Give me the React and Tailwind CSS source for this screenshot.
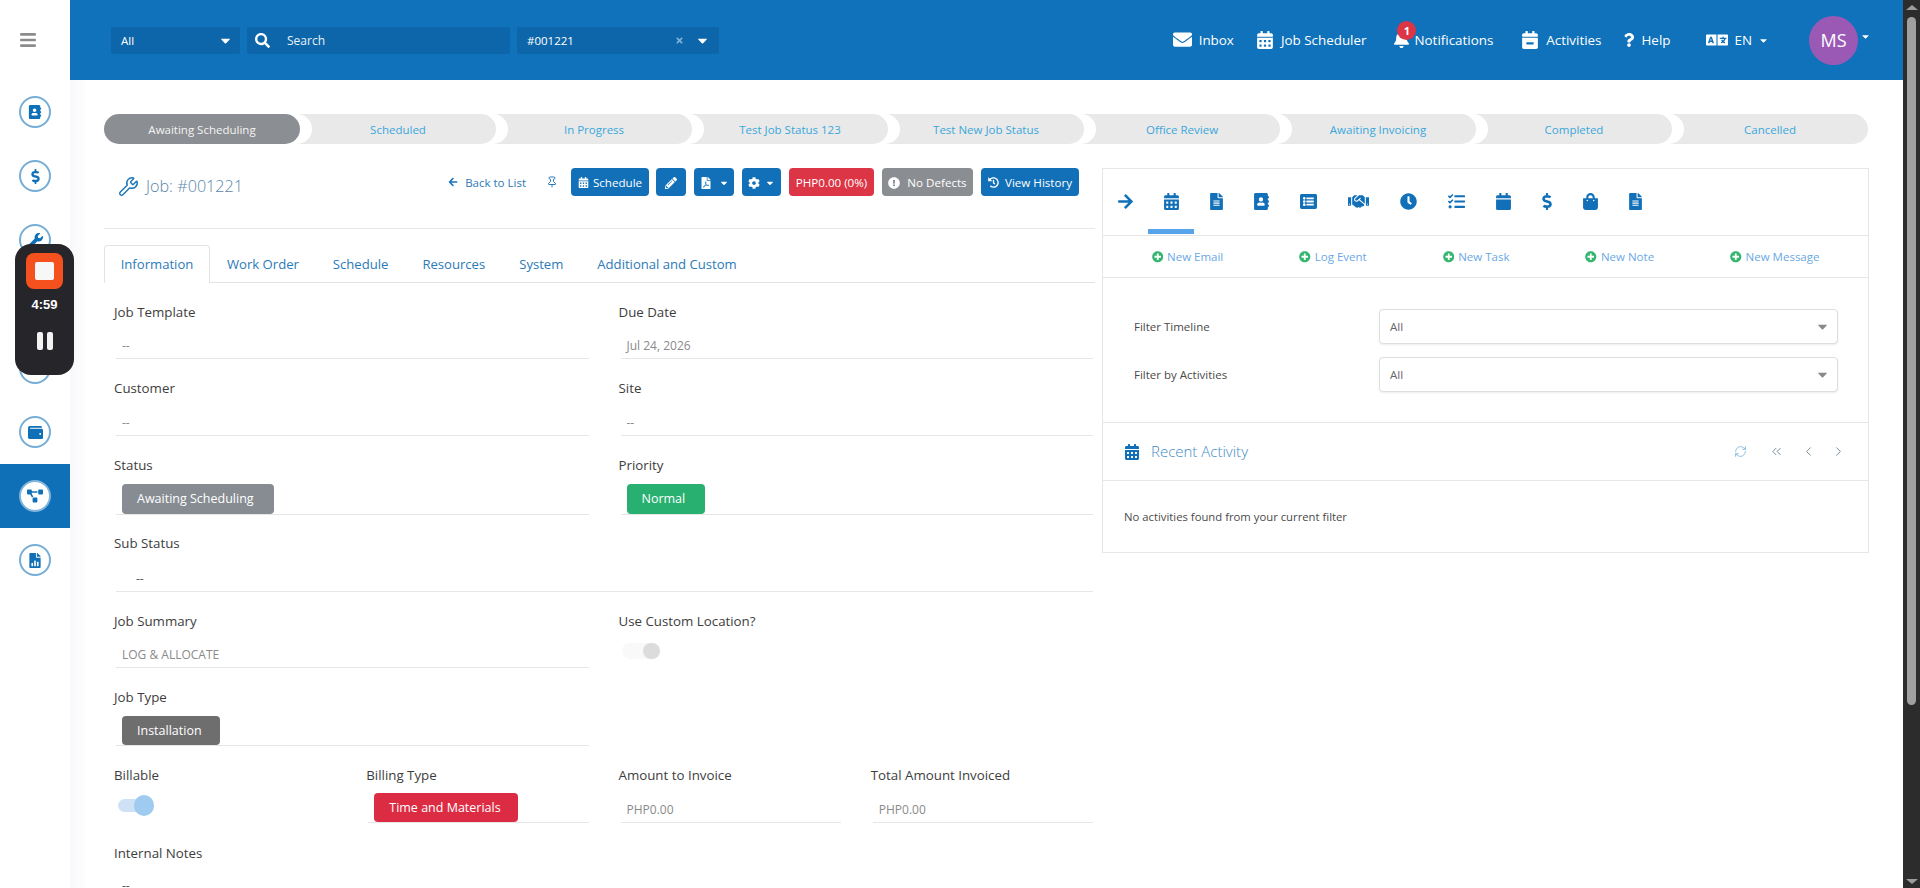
import React from "react";
import {
  FaBars, FaSearch, FaTimes, FaCaretDown, FaEnvelope, FaCalendarAlt, FaBell, FaCalendarMinus, FaQuestion, FaLanguage,
  FaAddressBook, FaDollarSign, FaWrench, FaWallet, FaProjectDiagram, FaArrowLeft, FaArrowRight, FaPencilAlt, FaFilePdf,
  FaCog, FaExclamationCircle, FaHistory, FaFileAlt, FaListAlt, FaHandshake, FaClock, FaTasks, FaCalendar, FaShoppingBag,
  FaPlusCircle, FaUsers, FaBoxes,
} from "react-icons/fa";
import { Pin, RefreshCw, ChevronsLeft, ChevronLeft, ChevronRight, Wrench } from "lucide-react";

const FileChart = ({ className }) => (
  <svg viewBox="0 0 384 512" className={className} fill="currentColor">
    <path d="M224 0H24C11 0 0 11 0 24v464c0 13 11 24 24 24h336c13 0 24-11 24-24V160H248c-13 0-24-11-24-24V0zm160 122v6H256V0h6c6 0 12 3 17 7l98 98c4 5 7 11 7 17z" />
    <rect x="70" y="340" width="56" height="110" fill="#fff" />
    <rect x="164" y="260" width="56" height="190" fill="#fff" />
    <rect x="258" y="300" width="56" height="150" fill="#fff" />
  </svg>
);

const sideItems = [
  { Icon: FaAddressBook, size: "text-[14px]" },
  { Icon: FaDollarSign, size: "text-[15px]" },
  { Icon: FaWrench, size: "text-[15px]" },
  { Icon: FaUsers, size: "text-[14px]" },
  { Icon: FaBoxes, size: "text-[14px]" },
  { Icon: FaWallet, size: "text-[15px]" },
  { Icon: FaProjectDiagram, size: "text-[16px]", active: true },
  { Icon: FileChart, size: "w-[12px] h-[15px]" },
];

const steps = [
  ["Awaiting Scheduling", "w-[196px] z-[9] bg-[#8b8e92] text-[#f4f4f4]"],
  ["Scheduled", "w-[216px] -ml-[20px] pl-[20px] z-[8] bg-[#e9e9e9] text-[#3aa7dc]"],
  ["In Progress", "w-[216px] -ml-[20px] pl-[20px] z-[7] bg-[#e9e9e9] text-[#3aa7dc]"],
  ["Test Job Status 123", "w-[216px] -ml-[20px] pl-[20px] z-[6] bg-[#e9e9e9] text-[#3aa7dc]"],
  ["Test New Job Status", "w-[216px] -ml-[20px] pl-[20px] z-[5] bg-[#e9e9e9] text-[#3aa7dc]"],
  ["Office Review", "w-[216px] -ml-[20px] pl-[20px] z-[4] bg-[#e9e9e9] text-[#3aa7dc]"],
  ["Awaiting Invoicing", "w-[216px] -ml-[20px] pl-[20px] z-[3] bg-[#e9e9e9] text-[#3aa7dc]"],
  ["Completed", "w-[216px] -ml-[20px] pl-[20px] z-[2] bg-[#e9e9e9] text-[#3aa7dc]"],
  ["Cancelled", "w-[216px] -ml-[20px] pl-[20px] z-[1] bg-[#e9e9e9] text-[#3aa7dc]"],
];

const Btn = ({ className = "", children }) => (
  <div className={`h-[28px] rounded-[4px] flex items-center justify-center text-white text-[11.6px] pt-[1px] ${className}`}>{children}</div>
);

const NavItem = ({ icon, children, className = "" }) => (
  <div className={`flex items-center text-white text-[13.4px] ${className}`}>
    {icon}
    <span className="pt-[1px]">{children}</span>
  </div>
);

const Label = ({ children }) => (
  <div className="h-[20px] pt-[2px] flex items-center text-[13.3px] text-[#3d3d3d] leading-none">{children}</div>
);

const Field = ({ label, row, box, className = "", children }) => (
  <div className={`${row} ${className}`}>
    <Label>{label}</Label>
    <div className={`${box} border-b border-[#e6e6e6] ml-[2px] relative flex items-end`}>{children}</div>
  </div>
);

const Val = ({ className = "text-[#8a8a8a] pl-[6px]", children }) => (
  <div className={`text-[12px] leading-none pb-[6px] ${className}`}>{children}</div>
);

const Chip = ({ className = "", children }) => (
  <div className={`rounded-[4px] text-white text-[12.5px] flex items-center pl-[15px] pt-[1px] leading-none ${className}`}>{children}</div>
);

const tabs = ["Work Order", "Schedule", "Resources", "System", "Additional and Custom"];

const panelIcons = [
  [FaCalendarAlt, "w-[15px] h-[17px]"],
  [FaFileAlt, "w-[13px] h-[17px]"],
  [FaAddressBook, "w-[15px] h-[17px]"],
  [FaListAlt, "w-[17px] h-[17px]"],
  [FaHandshake, "w-[21px] h-[17px]"],
  [FaClock, "w-[17px] h-[17px]"],
  [FaTasks, "w-[17px] h-[17px]"],
  [FaCalendar, "w-[15px] h-[17px]"],
  [FaDollarSign, "w-[10px] h-[17px]"],
  [FaShoppingBag, "w-[15px] h-[17px]"],
  [FaFileAlt, "w-[13px] h-[17px]"],
];

const actions = ["New Email", "Log Event", "New Task", "New Note", "New Message"];

const Filter = ({ label }) => (
  <div className="flex items-center h-[35px]">
    <div className="w-[247px] pl-[2px] text-[11.5px] text-[#4a4a4a]">{label}</div>
    <div className="w-[459px] h-[35px] rounded-[4px] border border-[#dedede] shadow-[0_1px_2px_rgba(0,0,0,0.08)] bg-white flex items-center justify-between pl-[10px] pr-[7px]">
      <span className="text-[11.5px] text-[#666]">All</span>
      <FaCaretDown className="text-[15px] text-[#8a8a8a]" />
    </div>
  </div>
);

export default function App() {
  return (
    <div className="relative flex h-screen overflow-hidden bg-white font-['Open_Sans',sans-serif]">
      {/* Sidebar */}
      <aside className="w-[70px] shrink-0 bg-white flex flex-col">
        <div className="h-[80px] flex items-center justify-center">
          <FaBars className="text-[#8b8b8b] text-[18px] mr-[14px]" />
        </div>
        {sideItems.map(({ Icon, size, active }, i) => (
          <div key={i} className={`h-[64px] flex items-center justify-center ${active ? "bg-[#0f70b7]" : ""}`}>
            <div className={`w-[32px] h-[32px] rounded-full border-2 bg-white flex items-center justify-center text-[#0f70b7] ${active ? "border-[#7fb4dc]" : "border-[#76add6]"}`}>
              <Icon className={size} />
            </div>
          </div>
        ))}
      </aside>

      {/* Main */}
      <div className="flex-1 min-w-0 flex flex-col">
        <header className="h-[80px] shrink-0 bg-[#0f72ba] flex items-center pl-[41px]">
          <div className="w-[129px] h-[27px] rounded-[2px] bg-[#0e66aa] flex items-center justify-between pl-[10px] pr-[7px] text-white text-[11.5px]">
            <span className="pt-[1px]">All</span>
            <FaCaretDown className="text-[15px]" />
          </div>
          <div className="ml-[7px] w-[263px] h-[27px] rounded-[2px] bg-[#0e66aa] flex items-center pl-[8px] text-white text-[12px]">
            <FaSearch className="text-[15px] mr-[17px]" />
            <span className="text-[#e8f1f8] pt-[1px]">Search</span>
          </div>
          <div className="ml-[7px] w-[202px] h-[27px] rounded-[2px] bg-[#0e66aa] flex items-center pl-[10px] pr-[9px] text-white text-[11.5px]">
            <span className="pt-[1px]">#001221</span>
            <FaTimes className="ml-auto text-[9px] text-[#7fb0d6] mr-[11px]" />
            <FaCaretDown className="text-[15px]" />
          </div>
          <div className="ml-auto flex items-center h-full">
            <NavItem icon={<FaEnvelope className="text-[19px] mr-[7px]" />}>Inbox</NavItem>
            <NavItem className="ml-[22px]" icon={<FaCalendarAlt className="text-[18px] mr-[7px]" />}>Job Scheduler</NavItem>
            <div className="relative ml-[27px]">
              <NavItem icon={<FaBell className="text-[17px] mr-[4px]" />}>Notifications</NavItem>
              <div className="absolute -top-[8px] left-[4px] w-[19px] h-[19px] rounded-full bg-[#dc3545] text-white text-[11px] font-bold flex items-center justify-center">1</div>
            </div>
            <NavItem className="ml-[28px]" icon={<FaCalendarMinus className="text-[18px] mr-[7px]" />}>Activities</NavItem>
            <NavItem className="ml-[20px]" icon={<FaQuestion className="text-[14px] mr-[6px]" />}>Help</NavItem>
            <NavItem className="ml-[36px]" icon={<FaLanguage className="text-[22px] mr-[6px]" />}>
              <span className="inline-flex items-center">
                EN
                <FaCaretDown className="text-[11px] ml-[6px]" />
              </span>
            </NavItem>
            <div className="ml-[40px] w-[49px] h-[49px] rounded-full bg-[#9b59b6] text-white text-[18px] flex items-center justify-center">MS</div>
            <FaCaretDown className="text-white text-[11px] ml-[2px] mr-[32px] -mt-[8px]" />
          </div>
        </header>

        <main className="flex-1 min-h-0 overflow-hidden bg-[linear-gradient(90deg,#f8f8fb,#ffffff_18px)] pl-[34px] pr-[34px] pt-[34px]">
          {/* Stepper */}
          <div className="flex h-[30px]">
            {steps.map(([label, cls]) => (
              <div key={label} className={`relative shrink-0 h-[30px] rounded-full shadow-[12px_0_0_#fff] flex items-center justify-center text-[11.5px] pt-[1px] ${cls}`}>
                {label}
              </div>
            ))}
          </div>

          <div className="flex mt-[24px]">
            {/* Left column */}
            <div className="w-[991px] shrink-0">
              <div className="h-[61px] border-b border-[#e8e8e8] flex items-start">
                <div className="flex items-center h-[37px] pl-[14px] text-[#5a86aa]">
                  <Wrench className="w-[21px] h-[21px] text-[#1a74b8] mr-[7px]" strokeWidth={1.6} />
                  <span className="text-[16.2px] font-light">Job: #001221</span>
                </div>
                <div className="ml-auto flex items-center h-[28px] pr-[16px]">
                  <FaArrowLeft className="text-[10px] text-[#1a74b8] mr-[7px]" />
                  <span className="text-[11.5px] text-[#2c7ab5] pt-[1px]">Back to List</span>
                  <Pin className="w-[12px] h-[12px] text-[#2c7ab5] ml-[20px] mr-[13px]" strokeWidth={2} />
                  <Btn className="w-[78px] bg-[#1170b8]">
                    <FaCalendarAlt className="text-[11px] mr-[4px]" />
                    Schedule
                  </Btn>
                  <Btn className="w-[30px] ml-[7px] bg-[#1170b8]"><FaPencilAlt className="text-[12px]" /></Btn>
                  <Btn className="w-[40px] ml-[8px] bg-[#1170b8]">
                    <FaFilePdf className="text-[12px]" />
                    <FaCaretDown className="text-[10px] ml-[7px]" />
                  </Btn>
                  <Btn className="w-[39px] ml-[8px] bg-[#1170b8]">
                    <FaCog className="text-[12px]" />
                    <FaCaretDown className="text-[10px] ml-[5px]" />
                  </Btn>
                  <Btn className="w-[85px] ml-[8px] bg-[#dc3545]">PHP0.00 (0%)</Btn>
                  <Btn className="w-[91px] ml-[8px] bg-[#8a8e92]">
                    <FaExclamationCircle className="text-[12px] mr-[7px]" />
                    No Defects
                  </Btn>
                  <Btn className="w-[98px] ml-[8px] bg-[#1170b8]">
                    <FaHistory className="text-[11px] mr-[6px]" />
                    View History
                  </Btn>
                </div>
              </div>

              {/* Tabs */}
              <div className="mt-[16px] h-[38px] border-b border-[#e3e3e3] flex text-[13.1px] text-[#2b7ab8]">
                <div className="w-[106px] h-[38px] bg-white border border-b-0 border-[#e3e3e3] rounded-t-[4px] flex items-center justify-center pt-[1px]">Information</div>
                <div className="flex items-center pl-[17px] gap-[34px] pt-[2px]">
                  {tabs.map((t) => (
                    <span key={t}>{t}</span>
                  ))}
                </div>
              </div>

              {/* Form */}
              <div className="pt-[19px] pl-[10px]">
                <div className="grid grid-cols-2 gap-x-[30px] w-[979px]">
                  <Field label="Job Template" row="h-[76px]" box="h-[37px]"><Val>--</Val></Field>
                  <Field label="Due Date" row="h-[76px]" box="h-[37px]"><Val>Jul 24, 2026</Val></Field>
                  <Field label="Customer" row="h-[77px]" box="h-[38px]"><Val>--</Val></Field>
                  <Field label="Site" row="h-[77px]" box="h-[38px]"><Val>--</Val></Field>
                  <Field label="Status" row="h-[78px]" box="h-[40px]">
                    <Chip className="ml-[6px] w-[152px] h-[30px] bg-[#868c92]">Awaiting Scheduling</Chip>
                  </Field>
                  <Field label="Priority" row="h-[78px]" box="h-[40px]">
                    <Chip className="ml-[6px] w-[78px] h-[30px] bg-[#27b06f]">Normal</Chip>
                  </Field>
                </div>
                <Field label="Sub Status" row="h-[78px] w-[979px]" box="h-[39px]">
                  <Val className="text-[#555] pl-[20px]">--</Val>
                </Field>
                <div className="grid grid-cols-2 gap-x-[30px] w-[979px]">
                  <Field label="Job Summary" row="h-[76px]" box="h-[37px]"><Val>LOG &amp; ALLOCATE</Val></Field>
                  <div className="h-[76px]">
                    <Label>Use Custom Location?</Label>
                    <div className="mt-[12px] ml-[3px] w-[38px] h-[16px] rounded-full bg-[#f9f9f9] flex justify-end">
                      <div className="w-[17px] h-[16px] rounded-full bg-[#dcdcdc]" />
                    </div>
                  </div>
                  <Field label="Job Type" row="h-[78px]" box="h-[39px]">
                    <Chip className="ml-[6px] w-[98px] h-[29px] bg-[#6e6e6e]">Installation</Chip>
                  </Field>
                  <div className="h-[78px]" />
                </div>
                <div className="grid grid-cols-4 gap-x-[30px] w-[979px]">
                  <div className="h-[78px]">
                    <Label>Billable</Label>
                    <div className="mt-[10px] ml-[4px] w-[36px] h-[21px] flex items-center relative">
                      <div className="w-[32px] h-[13px] rounded-full bg-[#cfe2f5]" />
                      <div className="absolute right-0 top-0 w-[20px] h-[21px] rounded-full bg-[#9fcbf0]" />
                    </div>
                  </div>
                  <Field label="Billing Type" row="h-[78px]" box="h-[38px]">
                    <Chip className="ml-[6px] w-[144px] h-[29px] bg-[#dc2c44]">Time and Materials</Chip>
                  </Field>
                  <Field label="Amount to Invoice" row="h-[78px]" box="h-[38px]"><Val>PHP0.00</Val></Field>
                  <Field label="Total Amount Invoiced" row="h-[78px]" box="h-[38px]"><Val>PHP0.00</Val></Field>
                </div>
                <Label>Internal Notes</Label>
                <div className="mt-[17px] pl-[8px] text-[12px] text-[#555] leading-none">--</div>
              </div>
            </div>

            {/* Right panel */}
            <div className="ml-[7px] w-[768px] h-[385px] border border-[#e6e6e6] bg-white">
              <div className="h-[67px] border-b border-[#e6e6e6] flex items-center pl-[15px] gap-[31px] text-[#1170b8] pb-[1px]">
                <FaArrowRight className="w-[15px] h-[17px]" />
                {panelIcons.map(([Icon, cls], i) => (
                  <div key={i} className="relative">
                    <Icon className={cls} />
                    {i === 0 && <div className="absolute top-[36px] -left-[16px] w-[46px] h-[5px] bg-[#56a5ea]" />}
                  </div>
                ))}
              </div>
              <div className="h-[42px] border-b border-[#e6e6e6] flex items-center justify-center gap-[76px] text-[11.5px] text-[#6aa8e6] pt-[1px]">
                {actions.map((a) => (
                  <div key={a} className="flex items-center">
                    <FaPlusCircle className="text-[11.5px] text-[#35b56f] mr-[4px]" />
                    {a}
                  </div>
                ))}
              </div>
              <div className="h-[145px] border-b border-[#e6e6e6] pl-[29px] pt-[31px] flex flex-col gap-[13px]">
                <Filter label="Filter Timeline" />
                <Filter label="Filter by Activities" />
              </div>
              <div className="h-[58px] border-b border-[#e6e6e6] flex items-center pl-[21px] pr-[22px]">
                <FaCalendarAlt className="text-[#1170b8] text-[16px] mr-[11px]" />
                <span className="text-[15px] font-light text-[#3f8cc7]">Recent Activity</span>
                <div className="ml-auto flex items-center">
                  <RefreshCw className="w-[13px] h-[13px] text-[#7fb6dc]" strokeWidth={1.6} />
                  <ChevronsLeft className="w-[15px] h-[15px] text-[#6f8291] ml-[22px]" strokeWidth={1.5} />
                  <ChevronLeft className="w-[15px] h-[15px] text-[#6f8291] ml-[17px]" strokeWidth={1.5} />
                  <ChevronRight className="w-[15px] h-[15px] text-[#6f8291] ml-[15px]" strokeWidth={1.5} />
                </div>
              </div>
              <div className="pl-[21px] pt-[28px] text-[11.3px] text-[#4a4a4a]">No activities found from your current filter</div>
            </div>
          </div>
        </main>
      </div>

      {/* Scrollbar */}
      <div className="w-[17px] shrink-0 bg-[#2c2c2c] flex flex-col items-center relative">
        <div className="mt-[5px] w-0 h-0 border-x-[6px] border-x-transparent border-b-[5px] border-b-[#9c9c9c]" />
        <div className="mt-[7px] w-[9px] h-[688px] rounded-full bg-[#a0a0a0]" />
        <div className="mt-auto mb-[4px] w-0 h-0 border-x-[6px] border-x-transparent border-t-[5px] border-t-[#9c9c9c]" />
      </div>

      {/* Recorder overlay */}
      <div className="absolute left-[15px] top-[244px] w-[59px] h-[131px] rounded-[16px] bg-[#26262a] flex flex-col items-center pt-[9px] z-20">
        <div className="w-[37px] h-[36px] rounded-[8px] bg-[#f4511e] flex items-center justify-center -ml-[1px]">
          <div className="w-[19px] h-[18px] rounded-[2px] bg-[#f7f7f7]" />
        </div>
        <div className="mt-[9px] text-white text-[13px] font-semibold leading-none font-['Liberation_Sans',sans-serif]">4:59</div>
        <div className="mt-[21px] flex gap-[4px]">
          <div className="w-[6px] h-[18px] rounded-[2px] bg-[#f2f2f2]" />
          <div className="w-[6px] h-[18px] rounded-[2px] bg-[#f2f2f2]" />
        </div>
      </div>
    </div>
  );
}
